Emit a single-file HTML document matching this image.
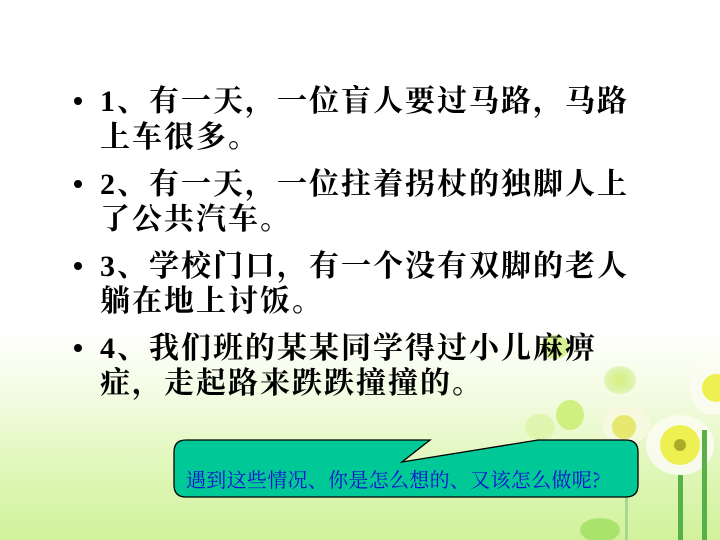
<!DOCTYPE html>
<html><head><meta charset="utf-8"><style>
html,body{margin:0;padding:0}
body{width:720px;height:540px;overflow:hidden;position:relative;
background:linear-gradient(to bottom,#ffffff 0px,#ffffff 330px,#f2fbe0 400px,#dff7b8 470px,#d2f19c 540px);
font-family:"Liberation Serif","Noto Serif CJK SC",serif;}
.t{position:absolute;left:100px;font-size:30px;letter-spacing:2px;font-weight:bold;color:#000;line-height:36px;white-space:nowrap;font-family:"Noto Serif CJK SC","Liberation Serif",serif}
.t span{font-family:"Liberation Serif",serif}
.b{position:absolute;left:74px;width:8px;height:8px;border-radius:50%;background:#000}
.q{position:absolute;left:186px;top:464px;font-size:20px;letter-spacing:0.3px;color:#1010d0;font-family:"Noto Serif CJK SC","Liberation Serif",serif;white-space:nowrap}
</style></head><body>
<svg width="720" height="540" style="position:absolute;left:0;top:0">
<defs><radialGradient id="pt"><stop offset="0" stop-color="#d8f080"/><stop offset="1" stop-color="#c4ea70" stop-opacity="0.4"/></radialGradient></defs>
<ellipse cx="620" cy="380" rx="16" ry="14" fill="url(#pt)"/>
<ellipse cx="555" cy="347" rx="14" ry="12" fill="#cdef78" opacity="0.8"/>
<ellipse cx="570" cy="415" rx="14" ry="15" fill="#c8ee6c" opacity="0.8"/>
<ellipse cx="540" cy="427" rx="15" ry="13" fill="#d8f3a0" opacity="0.7"/>
<ellipse cx="626" cy="425" rx="24" ry="20" fill="#f6f8e0" opacity="0.9"/>
<circle cx="624" cy="427" r="12" fill="#e6e870"/>
<g opacity="0.95">
<ellipse cx="680" cy="445" rx="34" ry="30" fill="#fbfdf0"/>
<circle cx="680" cy="445" r="20" fill="#eef04a"/>
<circle cx="680" cy="445" r="6" fill="#a6a820"/>
<ellipse cx="712" cy="385" rx="22" ry="30" fill="#fbfdf0"/>
<circle cx="716" cy="388" r="14" fill="#eef04a"/>
</g>
<rect x="678" y="475" width="5" height="65" fill="#58b048"/>
<rect x="702" y="430" width="5" height="110" fill="#58b048"/>
<rect x="625" y="470" width="3" height="70" fill="#a8d890"/>
<ellipse cx="600" cy="530" rx="20" ry="12" fill="#9fe060" opacity="0.8"/>
<path d="M186 440 L430 440 L402 462 L538 440 L626 440 Q638 440 638 452 L638 485 Q638 497 626 497 L186 497 Q174 497 174 485 L174 452 Q174 440 186 440 Z" fill="#00c896" stroke="#000" stroke-width="1.3"/>
</svg>
<div class="b" style="top:97px"></div><div class="t" style="top:80px"><span>1</span>、有一天，一位盲人要过马路，马路</div>
<div class="t" style="top:116px">上车很多。</div>
<div class="b" style="top:180px"></div><div class="t" style="top:163px"><span>2</span>、有一天，一位拄着拐杖的独脚人上</div>
<div class="t" style="top:198px">了公共汽车。</div>
<div class="b" style="top:262px"></div><div class="t" style="top:245px"><span>3</span>、学校门口，有一个没有双脚的老人</div>
<div class="t" style="top:280px">躺在地上讨饭。</div>
<div class="b" style="top:344px"></div><div class="t" style="top:327px"><span>4</span>、我们班的某某同学得过小儿麻痹</div>
<div class="t" style="top:362px">症，走起路来跌跌撞撞的。</div>
<div class="q">遇到这些情况、你是怎么想的、又该怎么做呢?</div>
</body></html>
